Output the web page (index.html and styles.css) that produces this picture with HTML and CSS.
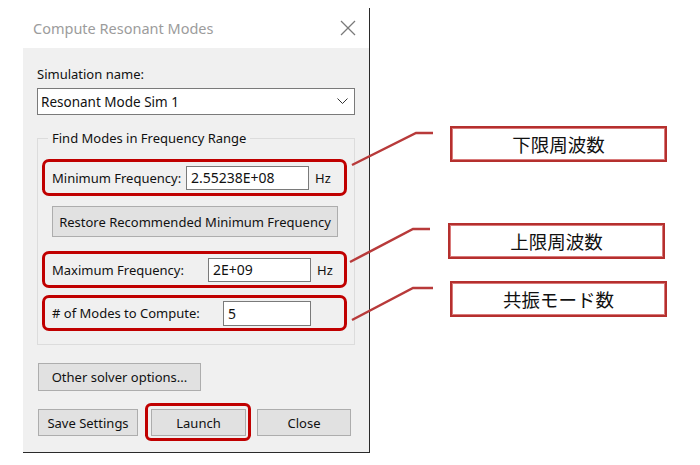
FILE: index.html
```html
<!DOCTYPE html>
<html lang="en">
<head>
  <meta charset="UTF-8" />
  <title>Compute Resonant Modes</title>
  <link rel="stylesheet" href="styles.css">
</head>
<body>

<div class="page">

  <!-- Dialog -->
  <div class="dialog">
    <div class="titlebar">
      <span class="title">Compute Resonant Modes</span>
      <svg class="close-x" width="16" height="16" viewBox="0 0 16 16">
        <line x1="1" y1="1" x2="15" y2="15" />
        <line x1="15" y1="1" x2="1" y2="15" />
      </svg>
    </div>

    <div class="dialog-body">
      <div class="label">Simulation name:</div>
      <div class="combo">
        <span>Resonant Mode Sim 1</span>
        <svg class="chevron" width="11" height="7" viewBox="0 0 11 7">
          <polyline points="0.5,0.5 5.5,5.5 10.5,0.5" />
        </svg>
      </div>

      <fieldset class="group">
        <legend>Find Modes in Frequency Range</legend>

        <div class="row hl">
          <span class="row-label min-label">Minimum Frequency:</span>
          <input class="field min-field" type="text" value="2.55238E+08" />
          <span class="unit">Hz</span>
        </div>

        <button class="btn restore">Restore Recommended Minimum Frequency</button>

        <div class="row hl max-row">
          <span class="row-label max-label">Maximum Frequency:</span>
          <input class="field max-field" type="text" value="2E+09" />
          <span class="unit">Hz</span>
        </div>

        <div class="row hl modes-row">
          <span class="row-label modes-label"># of Modes to Compute:</span>
          <input class="field modes-field" type="text" value="5" />
        </div>
      </fieldset>

      <button class="btn other">Other solver options...</button>

      <div class="actions">
        <button class="btn save">Save Settings</button>
        <button class="btn launch">Launch</button>
        <button class="btn close">Close</button>
      </div>
    </div>
  </div>

  <!-- Callouts -->
  <svg class="leaders" width="700" height="465" viewBox="0 0 700 465">
    <polyline points="352,165 416,133 433,133" />
    <polyline points="350,262 413,229 430,229" />
    <polyline points="352,320 413,288 433,288" />
  </svg>
  <div class="callout c1">下限周波数</div>
  <div class="callout c2">上限周波数</div>
  <div class="callout c3">共振モード数</div>

</div>

</body>
</html>
```

FILE: styles.css
```css
html, body {
  margin: 0;
  padding: 0;
  background-color: white;
  font-family: "Noto Sans", "Liberation Sans", sans-serif;
}
.page {
  position: relative;
  width: 700px;
  height: 465px;
  padding: 8px 0 0 23px;
  box-sizing: border-box;
}
.dialog {
  width: 346px;
  border-right: 1px solid #2a2a2a;
  border-bottom: 1px solid #2a2a2a;
  background-color: white;
}
.titlebar {
  height: 40px;
  display: flex;
  align-items: center;
  justify-content: space-between;
  padding: 0 13px 0 10px;
}
.title {
  font-size: 14.5px;
  color: #9c9c9c;
}
.close-x line {
  stroke: #7a7a7a;
  stroke-width: 1.2;
}
.dialog-body {
  height: 404px;
  box-sizing: border-box;
  background-color: #f0f0f0;
  padding: 18px 14px 0 14px;
  font-size: 13px;
  color: #111;
}
.label {
  line-height: 16px;
}
.combo {
  margin-top: 6px;
  height: 27px;
  box-sizing: border-box;
  border: 1px solid #7a7a7a;
  background-color: white;
  display: flex;
  align-items: center;
  justify-content: space-between;
  padding: 0 6px 0 3px;
  font-size: 13.5px;
}
.chevron polyline {
  fill: none;
  stroke: #333;
  stroke-width: 1;
}
.group {
  margin: 15px 0 0 0;
  padding: 13px 7px 13px 4px;
  border: 1px solid #dcdcdc;
  min-width: 0;
}
.group legend {
  margin-left: 6px;
  padding: 0 4px;
  line-height: 16px;
}
.row {
  display: flex;
  align-items: center;
  box-sizing: border-box;
  height: 37px;
}
.hl {
  border: 3px solid #c00000;
  border-radius: 7px;
  padding-left: 7px;
}
.row-label {
  flex: none;
}
.min-label { width: 134px; }
.max-label { width: 156px; }
.modes-label { width: 171px; }
.field {
  height: 24px;
  box-sizing: border-box;
  border: 1px solid #7a7a7a;
  background-color: white;
  font-family: inherit;
  font-size: 14px;
  color: #111;
  padding: 0 0 0 4px;
  margin: 0;
}
.min-field { width: 123px; }
.max-field { width: 103px; }
.modes-field { width: 88px; height: 25px; }
.unit {
  margin-left: 6px;
}
.btn {
  display: block;
  box-sizing: border-box;
  border: 1px solid #adadad;
  background-color: #e1e1e1;
  font-family: inherit;
  font-size: 13px;
  color: #111;
  padding: 0;
}
.restore {
  margin: 10px 0 0 10px;
  width: 286px;
  height: 31px;
}
.max-row {
  margin-top: 14px;
}
.modes-row {
  margin-top: 7px;
  height: 36px;
}
.other {
  margin: 18px 0 0 1px;
  width: 163px;
  height: 28px;
}
.actions {
  display: flex;
  margin: 18px 0 0 1px;
}
.actions .btn {
  height: 27px;
}
.save { width: 100px; }
.launch {
  position: relative;
  width: 95px;
  margin-left: 13px;
}
.launch::after {
  content: "";
  position: absolute;
  left: -7px;
  right: -6px;
  top: -7px;
  bottom: -6px;
  border: 3px solid #c00000;
  border-radius: 6px;
}
.close {
  width: 94px;
  margin-left: 11px;
}
.leaders {
  position: absolute;
  left: 0;
  top: 0;
}
.leaders polyline {
  fill: none;
  stroke: #b83a3a;
  stroke-width: 2.5;
}
.callout {
  position: absolute;
  box-sizing: border-box;
  width: 217px;
  height: 36px;
  border: 2px solid #b5302e;
  box-shadow: inset 0 0 0 1px #d97a7a;
  background-color: white;
  display: flex;
  align-items: center;
  justify-content: center;
  font-family: "Noto Sans CJK JP", sans-serif;
  font-size: 18.5px;
  color: #111;
}
.c1 { left: 450px; top: 126px; }
.c2 { left: 448px; top: 223px; }
.c3 { left: 450px; top: 281px; }
```
